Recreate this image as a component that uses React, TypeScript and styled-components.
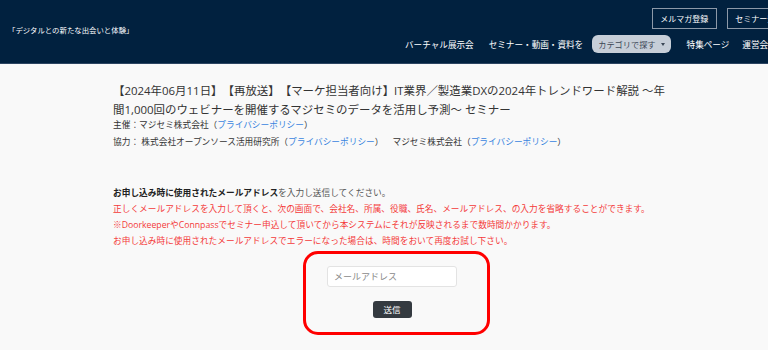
import React from "react";
import styled, { createGlobalStyle } from "styled-components";

const Global = createGlobalStyle`
  html, body { margin: 0; padding: 0; background: #f9f9f9; overflow: hidden; }
  body {
    font-family: "Open Sans", "Noto Sans CJK JP", sans-serif;
    color: #333;
    text-spacing-trim: space-all;
  }
  * { box-sizing: border-box; }
`;

const Header = styled.header`
  display: flex;
  height: 64px;
  background: #01213f;
  border-bottom: 1px solid #2c4562;
  padding-left: 8px;
  overflow: hidden;
`;

const Brand = styled.div`
  flex: 0 0 397px;
  display: flex;
  align-items: center;
  padding-bottom: 5px;
  color: #fff;
  font-size: 7.4px;
  white-space: nowrap;
`;

const HeaderRight = styled.div`
  flex: 0 0 384px;
  display: flex;
  flex-direction: column;
  padding-top: 8px;
`;

const TopRow = styled.div`
  display: flex;
  justify-content: flex-end;
  gap: 10px;
`;

const OutlineButton = styled.span`
  display: inline-flex;
  align-items: center;
  height: 21px;
  padding: 0 7.5px;
  border: 1px solid #8d99a8;
  color: #fff;
  font-size: 8px;
  white-space: nowrap;
`;

const NavRow = styled.nav`
  display: flex;
  align-items: center;
  margin-top: 6px;
  height: 18px;
  white-space: nowrap;
`;

const NavItem = styled.span<{ $gap?: number }>`
  color: #fff;
  font-size: 8.6px;
  margin-right: ${(p) => p.$gap ?? 15}px;
`;

const Pill = styled.span`
  display: inline-flex;
  align-items: center;
  gap: 5px;
  height: 18px;
  padding: 0 6px;
  margin-right: 16px;
  border-radius: 6px;
  background: #c6ced8;
  color: #3b4756;
  font-size: 8.2px;
`;

const Caret = styled.span`
  width: 0;
  height: 0;
  border-left: 2.5px solid transparent;
  border-right: 2.5px solid transparent;
  border-top: 3px solid #3b4756;
`;

const Main = styled.main`
  padding: 16.5px 0 0 113px;
`;

const Column = styled.div`
  width: 562px;
`;

const Title = styled.h1`
  margin: 0;
  font-size: 11.45px;
  font-weight: 400;
  line-height: 19px;
  color: #333;
`;

const Meta = styled.p<{ $top?: number }>`
  margin: ${(p) => p.$top ?? 0}px 0 0;
  font-size: 8.7px;
  line-height: 13px;
  color: #333;
  white-space: nowrap;
`;

const Link = styled.span`
  color: #3a86df;
`;

const Gap = styled.span`
  display: inline-block;
  width: 9px;
`;

const Notes = styled.div`
  margin-top: 36px;
  font-size: 8.7px;
  line-height: 16.3px;
  white-space: nowrap;
`;

const Lead = styled.p`
  margin: 0;
  color: #555;
`;

const Strong = styled.b`
  color: #222;
  font-weight: 700;
`;

const Warn = styled.p`
  margin: 0;
  color: #f43a3a;
`;

const Highlight = styled.form`
  display: flex;
  flex-direction: column;
  align-items: center;
  gap: 14px;
  width: 187px;
  margin: 1px 0 0 190px;
  padding: 12px 30px 14px 21px;
  border: 3px solid #ff0000;
  border-radius: 15px;
`;

const EmailInput = styled.input`
  width: 130px;
  height: 21px;
  padding: 0 6px;
  border: 1px solid #e3e3e3;
  border-radius: 3px;
  background: #fff;
  font-family: "Open Sans", "Noto Sans CJK JP", sans-serif;
  font-size: 9px;
  outline: none;
  &::placeholder { color: #8a8a8a; }
`;

const Submit = styled.button`
  width: 39px;
  height: 17px;
  padding: 0;
  border: none;
  border-radius: 3px;
  background: #343a40;
  color: #fff;
  font-family: "Open Sans", "Noto Sans CJK JP", sans-serif;
  font-size: 8.5px;
`;

export default function App() {
  return (
    <>
      <Global />
      <Header>
        <Brand>「デジタルとの新たな出会いと体験」</Brand>
        <HeaderRight>
          <TopRow>
            <OutlineButton>メルマガ登録</OutlineButton>
            <OutlineButton>セミナー登録</OutlineButton>
          </TopRow>
          <NavRow>
            <NavItem>バーチャル展示会</NavItem>
            <NavItem $gap={9}>セミナー・動画・資料を</NavItem>
            <Pill>
              カテゴリで探す
              <Caret />
            </Pill>
            <NavItem $gap={13}>特集ページ</NavItem>
            <NavItem>運営会社</NavItem>
          </NavRow>
        </HeaderRight>
      </Header>
      <Main>
        <Column>
          <Title>
            【2024年06月11日】【再放送】【マーケ担当者向け】IT業界／製造業DXの2024年トレンドワード解説 ～年間1,000回のウェビナーを開催するマジセミのデータを活用し予測～ セミナー
          </Title>
          <Meta>
            主催：マジセミ株式会社（<Link>プライバシーポリシー</Link>）
          </Meta>
          <Meta $top={4}>
            協力： 株式会社オープンソース活用研究所（<Link>プライバシーポリシー</Link>）<Gap />
            マジセミ株式会社（<Link>プライバシーポリシー</Link>）
          </Meta>
          <Notes>
            <Lead>
              <Strong>お申し込み時に使用されたメールアドレス</Strong>を入力し送信してください。
            </Lead>
            <Warn>
              正しくメールアドレスを入力して頂くと、次の画面で、会社名、所属、役職、氏名、メールアドレス、の入力を省略することができます。
            </Warn>
            <Warn>
              ※DoorkeeperやConnpassでセミナー申込して頂いてから本システムにそれが反映されるまで数時間かかります。
            </Warn>
            <Warn>
              お申し込み時に使用されたメールアドレスでエラーになった場合は、時間をおいて再度お試し下さい。
            </Warn>
          </Notes>
        </Column>
        <Highlight onSubmit={(e) => e.preventDefault()}>
          <EmailInput type="email" placeholder="メールアドレス" />
          <Submit type="submit">送信</Submit>
        </Highlight>
      </Main>
    </>
  );
}
